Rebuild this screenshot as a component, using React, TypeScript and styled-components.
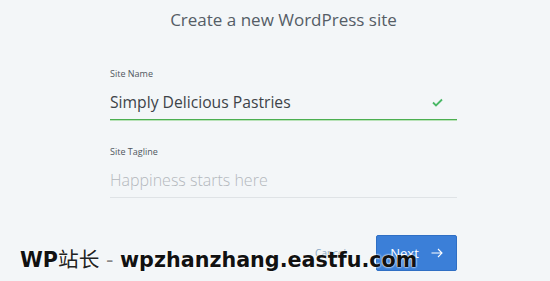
import { createGlobalStyle, styled } from 'styled-components';

const GlobalStyle = createGlobalStyle`
  html, body {
    margin: 0;
    padding: 0;
    background: #f3f6f8;
  }
  body {
    font-family: "Open Sans", "Noto Sans", sans-serif;
  }
`;

const Page = styled.div`
  position: relative;
  width: 550px;
  height: 281px;
  box-sizing: border-box;
  padding-left: 17px;
  overflow: hidden;
  background: #f3f6f8;
  display: flex;
  flex-direction: column;
  align-items: center;
`;

const Title = styled.h1`
  margin: 8px 0 0;
  font-size: 17px;
  font-weight: 400;
  line-height: 24px;
  color: #555d66;
`;

const Form = styled.div`
  width: 347px;
  margin-top: 36px;
  display: flex;
  flex-direction: column;
`;

const Field = styled.div`
  display: flex;
  flex-direction: column;
  margin-bottom: 26px;
`;

const Label = styled.label`
  font-size: 9px;
  line-height: 12px;
  color: #50575e;
`;

const InputRow = styled.div<{ $valid?: boolean }>`
  display: flex;
  align-items: center;
  justify-content: space-between;
  height: 34px;
  margin-top: 5px;
  border-bottom: 1px solid ${(p) => (p.$valid ? '#4caf50' : '#dfe3e6')};
  box-shadow: ${(p) => (p.$valid ? '0 1px 0 #b8e2b8' : 'none')};
  padding-right: 14px;
`;

const Value = styled.span<{ $placeholder?: boolean }>`
  font-size: ${(p) => (p.$placeholder ? '16px' : '15.7px')};
  font-weight: ${(p) => (p.$placeholder ? 300 : 400)};
  color: ${(p) => (p.$placeholder ? '#b3b8bd' : '#3d4348')};
`;

const Actions = styled.div`
  display: flex;
  justify-content: flex-end;
  align-items: center;
  gap: 30px;
  margin-top: 11px;
`;

const Cancel = styled.span`
  font-size: 10px;
  color: #8aa8c4;
`;

const NextButton = styled.button`
  width: 81px;
  height: 36px;
  border: 1px solid #2f6fc4;
  border-radius: 2px;
  background: #3b7fd8;
  color: #fff;
  font-family: "Open Sans", sans-serif;
  font-size: 13px;
  display: flex;
  align-items: center;
  justify-content: center;
  gap: 12px;
  padding: 0;
`;

const Watermark = styled.div`
  position: absolute;
  left: 20px;
  top: 244px;
  font-family: "DejaVu Sans", Verdana, sans-serif;
  font-weight: 700;
  font-size: 20.7px;
  line-height: 28px;
  color: #111;
  white-space: nowrap;
  text-shadow: 0 0 2px #fff, 0 0 2px #fff;
`;

const Cjk = styled.span`
  font-family: "Noto Sans CJK SC", sans-serif;
  font-weight: 400;
  color: #222;
`;

const Dash = styled.span`
  font-weight: 400;
  color: #888;
`;

function Check() {
  return (
    <svg width="11" height="9" viewBox="0 0 11 9">
      <path d="M1 4.5 L4 7.5 L10 1.5" fill="none" stroke="#4ab866" strokeWidth="1.8" />
    </svg>
  );
}

function Arrow() {
  return (
    <svg width="12" height="10" viewBox="0 0 12 10">
      <path d="M0.5 5 H11 M7 1 L11 5 L7 9" fill="none" stroke="#fff" strokeWidth="1.1" />
    </svg>
  );
}

export default function App() {
  return (
    <Page>
      <GlobalStyle />
      <Title>Create a new WordPress site</Title>
      <Form>
        <Field>
          <Label>Site Name</Label>
          <InputRow $valid>
            <Value>Simply Delicious Pastries</Value>
            <Check />
          </InputRow>
        </Field>
        <Field>
          <Label>Site Tagline</Label>
          <InputRow>
            <Value $placeholder>Happiness starts here</Value>
          </InputRow>
        </Field>
        <Actions>
          <Cancel>Cancel</Cancel>
          <NextButton>
            Next <Arrow />
          </NextButton>
        </Actions>
      </Form>
      <Watermark>
        WP<Cjk>站长</Cjk>
        <Dash> - </Dash>wpzhanzhang.eastfu.com
      </Watermark>
    </Page>
  );
}
